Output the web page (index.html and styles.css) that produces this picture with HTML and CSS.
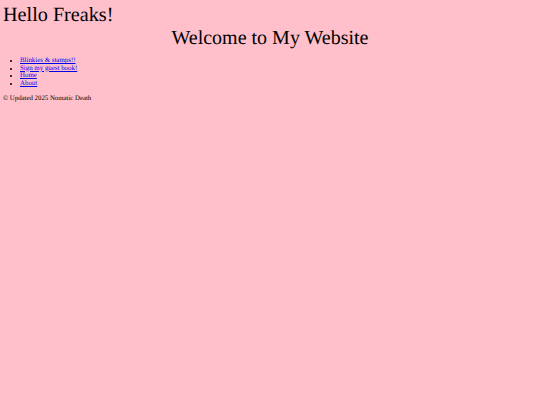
FILE: index.html
```html
<!DOCTYPE html>
<html>
<head>
<meta charset="utf-8">
<link rel="stylesheet" href="styles.css">
</head>
<body>
<h1 class="hello">Hello Freaks!</h1>
<h2 class="welcome">Welcome to My Website</h2>
<ul class="nav">
<li><a href="#">Blinkies &amp; stamps!!</a></li>
<li><a href="#">Sign my guest book!</a></li>
<li><a href="#">Home</a></li>
<li><a href="#">About</a></li>
</ul>
<p class="footer">© Updated 2025 Nomatic Death</p>
</body>
</html>
```
FILE: styles.css
```css
html, body {
  background: #ffc0cb;
}
body {
  margin: 0;
  padding: 4px 3px 3px;
  font-family: "Liberation Serif", "Times New Roman", serif;
  color: #000;
  text-rendering: geometricPrecision;
}
.hello {
  margin: 0;
  font-size: 20.2px;
  font-weight: normal;
  line-height: 22px;
}
.welcome {
  margin: 1px 0 0;
  font-size: 20px;
  font-weight: normal;
  line-height: 22px;
  text-align: center;
}
.nav {
  margin: 8px 0 0;
  padding-left: 17px;
  font-size: 6.9px;
  line-height: 7.5px;
}
.nav a {
  color: #0000ee;
}
.footer {
  margin: 8px 0 0;
  font-size: 6.8px;
  line-height: 8px;
}
```
